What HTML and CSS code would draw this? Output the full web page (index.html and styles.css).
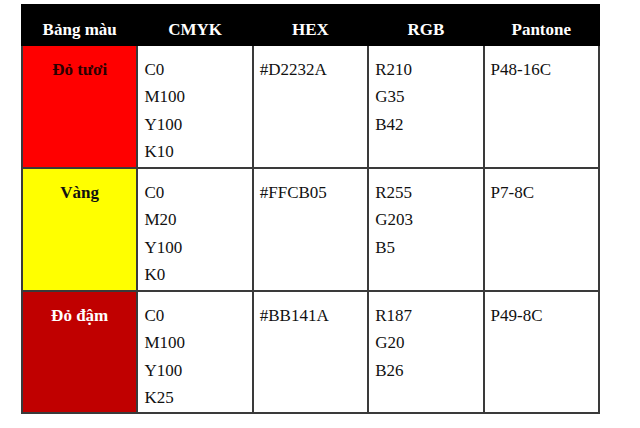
FILE: index.html
```html
<!DOCTYPE html>
<html lang="vi">
<head>
<meta charset="utf-8">
<title>Bảng màu</title>
<link rel="stylesheet" href="styles.css">
</head>
<body>
<table class="palette">
  <colgroup>
    <col class="c"><col class="c"><col class="c"><col class="c"><col class="c">
  </colgroup>
  <thead>
    <tr>
      <th>Bảng màu</th>
      <th>CMYK</th>
      <th>HEX</th>
      <th>RGB</th>
      <th>Pantone</th>
    </tr>
  </thead>
  <tbody>
    <tr>
      <td class="name red">Đỏ tươi</td>
      <td>C0<br>M100<br>Y100<br>K10</td>
      <td>#D2232A</td>
      <td>R210<br>G35<br>B42</td>
      <td>P48-16C</td>
    </tr>
    <tr>
      <td class="name yellow">Vàng</td>
      <td>C0<br>M20<br>Y100<br>K0</td>
      <td>#FFCB05</td>
      <td>R255<br>G203<br>B5</td>
      <td>P7-8C</td>
    </tr>
    <tr class="last">
      <td class="name dark">Đỏ đậm</td>
      <td>C0<br>M100<br>Y100<br>K25</td>
      <td>#BB141A</td>
      <td>R187<br>G20<br>B26</td>
      <td>P49-8C</td>
    </tr>
  </tbody>
</table>
</body>
</html>
```
FILE: styles.css
```css
html, body {
  margin: 0;
  padding: 0;
  background: #ffffff;
}
body {
  padding: 4px 0 0 21px;
  font-family: "Liberation Serif", "Times New Roman", serif;
  font-size: 17px;
  color: #111111;
}
.palette {
  border-collapse: collapse;
  table-layout: fixed;
  width: 579px;
  border: 2px solid #3a3a3a;
}
.palette .c {
  width: 20%;
}
.palette th {
  background: #000000;
  color: #ffffff;
  font-weight: bold;
  text-align: center;
  height: 39px;
  padding: 10px 6px 0;
  line-height: 27.5px;
  border: 2px solid #000000;
  box-sizing: border-box;
  vertical-align: top;
}
.palette td {
  border: 2px solid #3a3a3a;
  vertical-align: top;
  text-align: left;
  padding: 10px 6px 0;
  line-height: 27.5px;
  height: 123px;
  box-sizing: border-box;
}
.palette .last td {
  height: 122px;
}
.palette td.name {
  text-align: center;
  font-weight: bold;
}
.red {
  background: #ff0000;
  color: #2a0000;
}
.yellow {
  background: #ffff00;
  color: #111111;
}
.dark {
  background: #c00000;
  color: #ffffff;
}
```
